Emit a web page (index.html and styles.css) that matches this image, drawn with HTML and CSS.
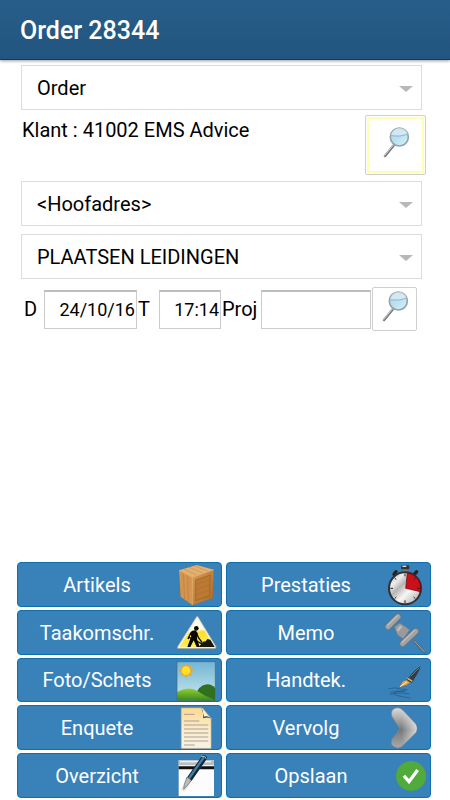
FILE: index.html
```html
<!DOCTYPE html>
<html lang="nl">
<head>
<meta charset="utf-8">
<meta name="viewport" content="width=device-width, initial-scale=1">
<title>Order 28344</title>
<link rel="stylesheet" href="styles.css">
</head>
<body>
<svg class="defs" aria-hidden="true">
  <defs>
    <linearGradient id="lens" x1="0" y1="0" x2="1" y2="1"><stop offset="0" stop-color="#b4d6e6"/><stop offset=".5" stop-color="#bce0ef"/><stop offset="1" stop-color="#d3f6fd"/></linearGradient>
    <symbol id="magnifier" viewBox="463 371 96 126">
      <path d="M505 434 478 467" stroke="#8c8c90" stroke-width="8" stroke-linecap="round"/>
      <path d="M503 434 477 465" stroke="#cfcfd2" stroke-width="3" stroke-linecap="round"/>
      <path d="M504 438 480 468" stroke="#66666a" stroke-width="2" stroke-linecap="round"/>
      <circle cx="521" cy="410" r="27" fill="url(#lens)" stroke="#94a3ac" stroke-width="5"/>
      <path d="M496 404q24 5 50-4-5-17-25-17-21 1-25 21z" fill="#e2f0f6" opacity=".6"/>
      <path d="M496 406q24 5 50-4" fill="none" stroke="#8fb8d8" stroke-width="3"/>
    </symbol>
  </defs>
</svg>
<div class="page">
  <header class="bar"><h1>Order 28344</h1></header>
  <main class="form">
    <div class="picker"><select aria-label="Type"><option>Order</option></select></div>
    <div class="client">
      <span>Klant : 41002 EMS Advice</span>
      <button class="search search-focus" type="button" aria-label="Klant zoeken"><svg class="lens"><use href="#magnifier"/></svg></button>
    </div>
    <div class="picker"><select aria-label="Adres"><option>&lt;Hoofadres&gt;</option></select></div>
    <div class="picker"><select aria-label="Taak"><option>PLAATSEN LEIDINGEN</option></select></div>
    <div class="details">
      <label for="date">D</label><input id="date" type="text" value="24/10/16">
      <label for="time">T</label><input id="time" type="text" value="17:14">
      <label for="project">Proj</label><input id="project" type="text">
      <button class="search" type="button" aria-label="Project zoeken"><svg class="lens"><use href="#magnifier"/></svg></button>
    </div>
  </main>
  <nav class="actions">
    <button type="button"><span>Artikels</span>
      <svg class="icon" viewBox="33 24 126 132">
        <defs><linearGradient id="wood" x1="0" y1="0" x2="1" y2="1"><stop offset="0" stop-color="#d79b54"/><stop offset="1" stop-color="#aa682a"/></linearGradient></defs>
        <path d="M42 46 95 30 146 44 143 129 82 150 47 125z" fill="#a96b2d"/>
        <path d="M42 46 95 30 146 44 82 67z" fill="#e3b06f"/>
        <path d="M42 46 82 67 82 150 47 125z" fill="#d3944f"/>
        <path d="M82 67 146 44 143 129 82 150z" fill="url(#wood)"/>
        <path d="M92 75 136 60 134 122 92 137z" fill="#bb7934" stroke="#99601f" stroke-width="2"/>
        <path d="M92 89 136 74M92 104 135 89M92 120 134 106M57 42 96 61M73 37 114 55M89 33 130 50" stroke="#98622b" stroke-width="1.5" opacity=".5"/>
        <path d="M55 54 59 133M68 60 70 141" stroke="#a4692e" stroke-width="1.5" opacity=".6"/>
        <path d="M42 46 82 67 146 44M82 67V150" fill="none" stroke="#edbd7e" stroke-width="2"/>
      </svg></button>
    <button type="button"><span>Prestaties</span>
      <svg class="icon" viewBox="30 24 126 132">
        <defs><linearGradient id="dial" x1="0" y1="0" x2="1" y2="1"><stop offset="0" stop-color="#aaa"/><stop offset=".25" stop-color="#eee"/><stop offset=".4" stop-color="#b5b5b5"/><stop offset=".6" stop-color="#f7f7f7"/><stop offset="1" stop-color="#999"/></linearGradient></defs>
        <path d="M57 58 63 50M118 58 125 50" stroke="#222" stroke-width="10" stroke-linecap="round"/>
        <path d="M84 38h13v14H84z" fill="#777"/><rect x="78" y="31" width="25" height="12" rx="4" fill="#333"/><path d="M82 34h12" stroke="#ddd" stroke-width="4"/>
        <circle cx="90" cy="100" r="48" fill="url(#dial)" stroke="#303236" stroke-width="6"/>
        <path d="M92 100 97 54A46 46 0 0 1 136 110z" fill="#c9101b" stroke="#640007" stroke-width="2"/>
        <path d="M90 56v8M90 136v8M46 100h8M126 100h8M59 69l5 5M59 131l5-5M121 131l-5-5M121 69l-5 5" stroke="#222" stroke-width="3"/>
      </svg></button>
    <button type="button"><span>Taakomschr.</span>
      <svg class="icon" viewBox="33 166 126 132">
        <defs><linearGradient id="sign" x1="0" y1="0" x2=".2" y2="1"><stop offset="0" stop-color="#fff"/><stop offset=".48" stop-color="#fffde0"/><stop offset=".56" stop-color="#ffdd2a"/><stop offset="1" stop-color="#ffef51"/></linearGradient></defs>
        <path d="M94 183Q97 180 100 184L153 272Q155 279 149 279H40Q34 279 38 272z" fill="#f0f0ea" stroke="#848984" stroke-width="2"/>
        <path d="M97 190 147 273H44z" fill="url(#sign)"/>
        <circle cx="94" cy="218" r="7" fill="#080808"/>
        <path d="M77 229q5-6 15-5l6 9-2 16 8 25h-9l-9-20-10 20h-9l12-33-3-3-4 13-5-2z" fill="#080808"/>
        <path d="M94 231 101 247 111 260M71 244 114 266" fill="none" stroke="#080808" stroke-width="4"/>
        <path d="M101 274 114 258 122 257 127 250 136 252 149 274z" fill="#171806"/>
      </svg></button>
    <button type="button"><span>Memo</span>
      <svg class="icon" viewBox="30 166 126 132">
        <path d="M118 257 149 291" stroke="#5b6369" stroke-width="7" stroke-linecap="round"/>
        <path d="M118 256 148 289" stroke="#a6a9ab" stroke-width="3" stroke-linecap="round"/>
        <path d="M58 213 75 202 104 222 85 250 67 237z" fill="#9a9a9c" stroke="#747a7f" stroke-width="2"/>
        <path d="M67 226 79 211" stroke="#bcbcbd" stroke-width="8"/>
        <path d="M39 213 69 183M83 264 122 227" stroke="#6d7479" stroke-width="19" stroke-linecap="round"/>
        <path d="M39 213 69 183M83 264 122 227" stroke="#a2a2a3" stroke-width="15" stroke-linecap="round"/>
        <path d="M38 209 67 180M82 260 119 224" stroke="#bebebf" stroke-width="4" stroke-linecap="round"/>
      </svg></button>
    <button type="button"><span>Foto/Schets</span>
      <svg class="icon" viewBox="33 -51 126 132">
        <defs><linearGradient id="sky" x1="0" y1="0" x2="0" y2="1"><stop offset="0" stop-color="#75b5d4"/><stop offset="1" stop-color="#c7e9ed"/></linearGradient><linearGradient id="hill" x1="0" y1="0" x2="0" y2="1"><stop offset="0" stop-color="#91cf35"/><stop offset="1" stop-color="#39861b"/></linearGradient></defs>
        <path d="M36-43H151V74H36z" fill="url(#sky)"/>
        <path d="M90 63Q99 27 127 25 143 26 151 37V74H90z" fill="#31701f"/>
        <path d="M36 49Q72 27 102 48 119 60 139 67L151 74H36z" fill="url(#hill)"/>
        <path d="M63-38 68-28 79-33 76-22 87-17 77-11 81 0 69-4 63 6 57-4 46 0 50-11 40-17 50-22 47-33 58-28z" fill="#f5a423"/>
        <circle cx="63" cy="-16" r="13" fill="#ffe12b"/>
        <path d="M36-43H151V74H36z" fill="none" stroke="#3c6c76" stroke-width="2"/>
      </svg></button>
    <button type="button"><span>Handtek.</span>
      <svg class="icon" viewBox="30 -51 126 132">
        <path d="M40 39Q60 31 80 40 115 39 76 46 45 49 63 58 87 63 105 66M44 56Q65 49 103 53" fill="none" stroke="#20577f" stroke-width="3" opacity=".6"/>
        <path d="M46 50Q67 43 89 47" fill="none" stroke="#194768" stroke-width="2" opacity=".7"/>
        <path d="M102 3Q121-21 136-29 138-22 115 13z" fill="#333b40"/>
        <path d="M107 1 133-25" stroke="#727c82" stroke-width="3"/>
        <path d="M100 4 116 13 110 20 95 11z" fill="#1e2020"/>
        <path d="M97 7 112 16" stroke="#dcae62" stroke-width="5"/>
        <path d="M94 12 106 20 94 28 73 34 83 16z" fill="#d9a55c" stroke="#725127" stroke-width="1"/>
        <path d="M75 32 96 17" stroke="#fff0bc" stroke-width="3"/>
      </svg></button>
    <button type="button"><span>Enquete</span>
      <svg class="icon" viewBox="33 91 126 132">
        <defs><linearGradient id="paper" x1="0" y1="0" x2="0" y2="1"><stop offset="0" stop-color="#fed98f"/><stop offset=".5" stop-color="#fcebca"/><stop offset="1" stop-color="#f7f3ea"/></linearGradient></defs>
        <path d="M49 97H112L138 128V218H49z" fill="url(#paper)" stroke="#d8bd83" stroke-width="2"/>
        <path d="M109 98 138 129Q126 122 115 128 116 111 109 98z" fill="#273946"/>
        <path d="M111 98 135 126Q124 119 117 123z" fill="#fff2ce"/>
        <path d="M57 116H89M57 136H103M57 148H130M57 160H130M57 172H130M57 184H130M57 196H130M57 208H89" stroke="#aaa18f" stroke-width="3"/>
      </svg></button>
    <button type="button"><span>Vervolg</span>
      <svg class="icon" viewBox="30 91 126 132">
        <defs><linearGradient id="steel" x1="0" y1="0" x2="0" y2="1"><stop offset="0" stop-color="#ddd"/><stop offset=".55" stop-color="#777"/><stop offset="1" stop-color="#aaa"/></linearGradient><linearGradient id="shine"><stop offset=".4" stop-color="#fff" stop-opacity="0"/><stop offset="1" stop-color="#fff" stop-opacity=".7"/></linearGradient></defs>
        <path d="M50 121Q46 102 62 97 75 93 85 105L121 144Q129 155 123 170L85 208Q74 221 61 215 45 210 50 192L75 160z" fill="url(#steel)" stroke="#868686" stroke-width="2"/>
        <path d="M50 121Q46 102 62 97 75 93 85 105L121 144Q129 155 123 170L85 208Q74 221 61 215 45 210 50 192L75 160z" fill="url(#shine)"/>
      </svg></button>
    <button type="button"><span>Overzicht</span>
      <svg class="icon" viewBox="33 234 126 132">
        <path d="M41 253H147V360H41z" fill="#fcfcfc"/>
        <path d="M41 253H147V268H41z" fill="#b9bec1"/>
        <path d="M45 257H138" stroke="#eee" stroke-width="4"/>
        <path d="M41 271H147V280H41z" fill="#111"/>
        <path d="M53 343 112 258" stroke="#aaa" stroke-width="12" opacity=".35"/>
        <path d="M74 308 117 246" stroke="#112638" stroke-width="17" stroke-linecap="round"/>
        <path d="M72 307 115 246" stroke="#457fa9" stroke-width="7" stroke-linecap="round"/>
        <path d="M66 303 79 313 66 330 56 339 58 325z" fill="#bbb" stroke="#666" stroke-width="2"/>
        <path d="M109 241 119 241 123 248" fill="none" stroke="#c1d4df" stroke-width="3"/>
      </svg></button>
    <button type="button"><span>Opslaan</span>
      <svg class="icon icon-small" viewBox="57 234 96 132">
        <circle cx="105" cy="300" r="45" fill="#50aa3c"/>
        <path d="M87 303 99 317 122 286" fill="none" stroke="#fff" stroke-width="10" stroke-linecap="square"/>
      </svg></button>
  </nav>
</div>
</body>
</html>
```
FILE: styles.css
```css
* { box-sizing: border-box; }
body {
  margin: 0;
  background: #fff;
  color: #000;
  font: 20px/24px Roboto, "Liberation Sans", sans-serif;
}
button, select, input { font: inherit; color: inherit; }
.defs { position: absolute; width: 0; height: 0; }
.page { display: flex; flex-direction: column; min-height: 100vh; }

.bar {
  display: flex;
  align-items: center;
  height: 60px;
  padding: 2px 20px 0;
  background: linear-gradient(#275e89, #22557f);
  border-bottom: 1px solid #0d3c6b;
  box-shadow: 0 1px 3px #0006;
}
h1 { margin: 0; color: #fff; font-size: 25px; font-weight: 500; line-height: 32px; }

.form { flex: 1; padding: 5px 28px 0 21px; }
.picker { position: relative; margin-bottom: 8px; }
.picker select {
  display: block;
  width: 100%;
  height: 45px;
  padding: 0 15px;
  border: 1px solid #dcdcdc;
  border-radius: 0;
  background: #fff;
  appearance: none;
}
.picker::after {
  content: "";
  position: absolute;
  top: 21px;
  right: 9px;
  border: solid transparent;
  border-width: 6px 7px 0;
  border-top-color: #b8b8ba;
  pointer-events: none;
}
.client { display: flex; justify-content: space-between; margin: -3px -4px 6px 1px; }
.client span { padding-top: 3px; }

.search {
  display: flex;
  align-items: center;
  justify-content: center;
  width: 45px;
  height: 44px;
  padding: 0;
  border: 1px solid #cfcfd2;
  border-radius: 2px;
  background: #fff;
}
.search-focus { width: 61px; height: 60px; box-shadow: inset 0 0 0 1px #fff, inset 0 0 0 3px #ffffb4; }
.lens { width: 32px; height: 42px; flex: none; }

.details {
  display: grid;
  grid-template-columns: 21px 93px 22px 62px 40px 1fr 45px;
  align-items: center;
  margin: 8px 6px 0 2px;
}
.details label { padding-left: 1px; }
.details input {
  width: 100%;
  height: 39px;
  padding: 0 1px;
  border: 1px solid #ccc;
  border-top: 2px solid #bdbdc0;
  border-radius: 0;
  background: #fff;
  font-size: 18px;
  text-align: right;
}
.details .search { margin-left: 1px; }

.actions {
  display: grid;
  grid-template-columns: 1fr 1fr;
  grid-auto-rows: 1fr;
  gap: 3px 4px;
  height: 238px;
  padding: 0 19px 2px 17px;
}
.actions button {
  display: flex;
  align-items: center;
  min-height: 0;
  padding: 1px 3px 0 0;
  border: 1px solid #0f6eae;
  border-radius: 4px;
  background: #3981b9;
  color: #fff;
}
.actions span { flex: 1; text-align: center; }
.icon { width: 42px; height: 44px; flex: none; margin: -1px 0; }
.icon-small { width: 32px; }
```
